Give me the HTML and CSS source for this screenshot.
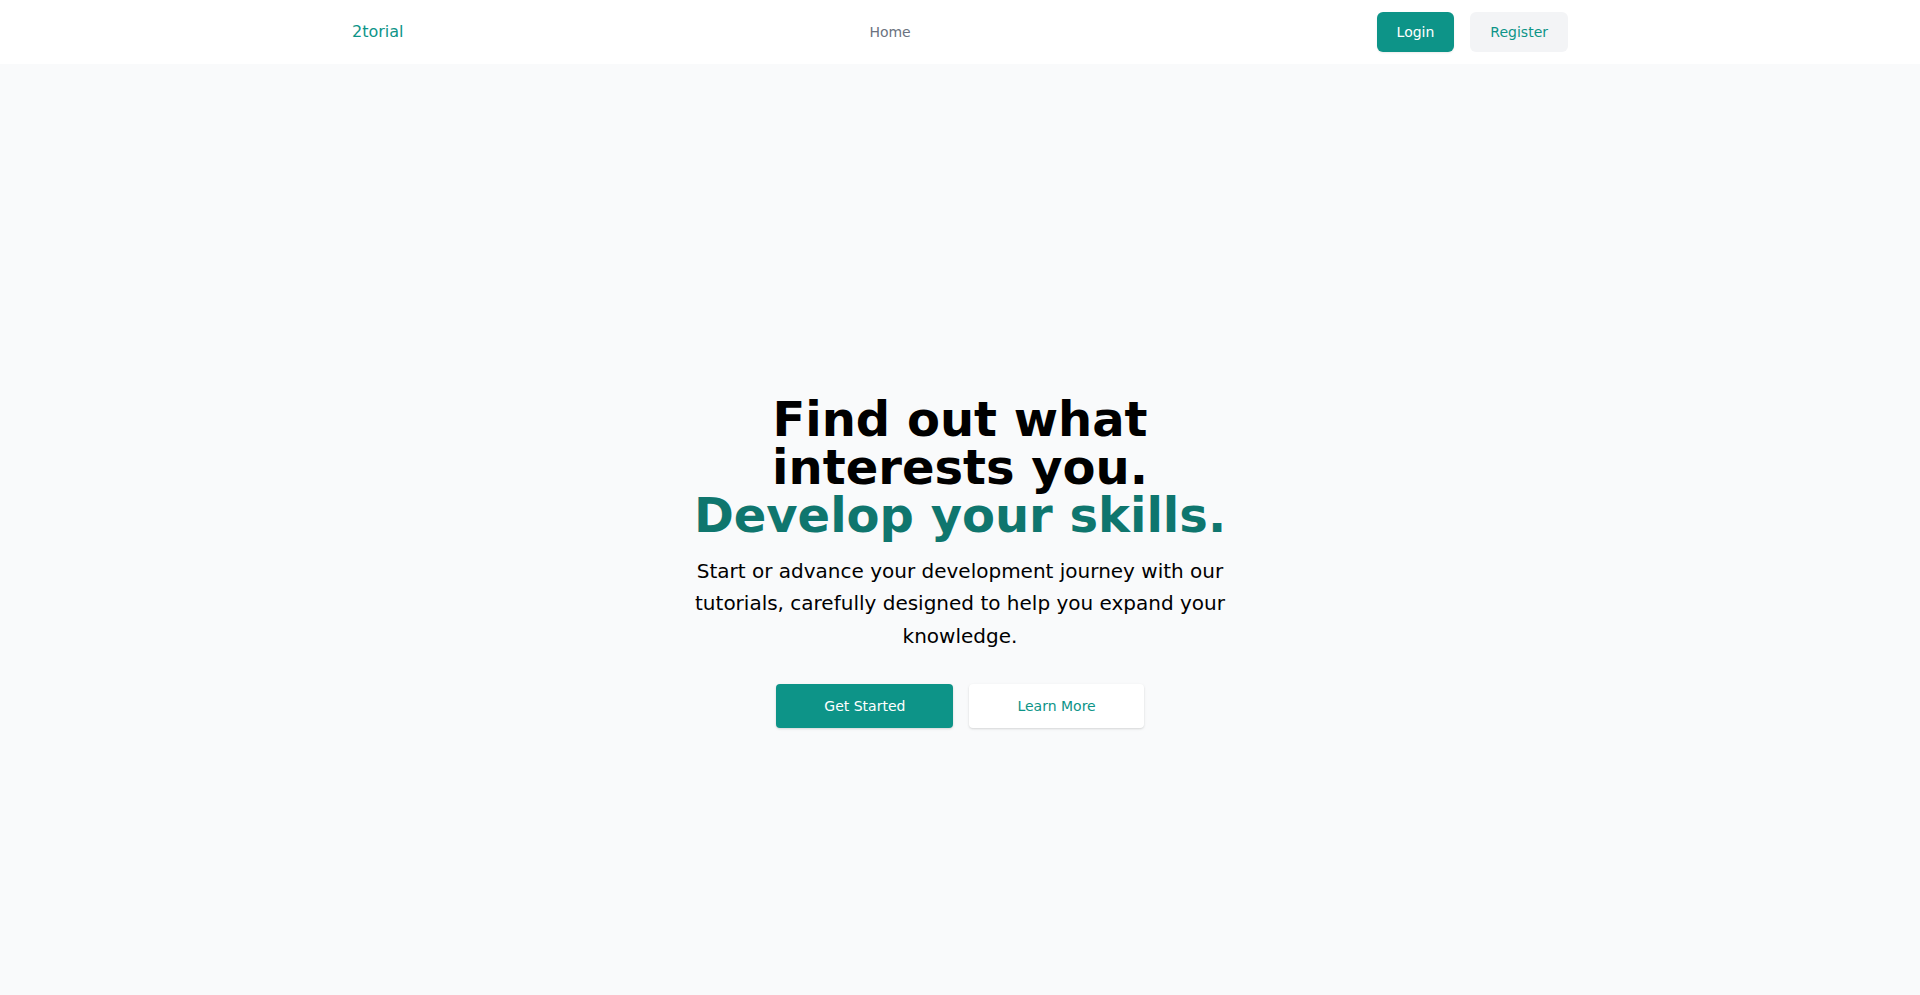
FILE: index.html
```html
<!DOCTYPE html>
<html lang="en">
<head>
<meta charset="utf-8">
<title>2torial</title>
<link rel="stylesheet" href="styles.css">
</head>
<body>
<header class="site-header">
  <div class="header-inner">
    <a class="logo" href="#">2torial</a>
    <nav class="nav">
      <a class="nav-link" href="#">Home</a>
    </nav>
    <div class="auth">
      <a class="btn btn-login" href="#">Login</a>
      <a class="btn btn-register" href="#">Register</a>
    </div>
  </div>
</header>
<main class="hero">
  <div class="hero-inner">
    <h1 class="hero-title">Find out what interests you.<span class="hero-accent">Develop your skills.</span></h1>
    <p class="hero-text">Start or advance your development journey with our tutorials, carefully designed to help you expand your knowledge.</p>
    <div class="hero-actions">
      <a class="cta cta-primary" href="#">Get Started</a>
      <a class="cta cta-secondary" href="#">Learn More</a>
    </div>
  </div>
</main>
</body>
</html>
```

FILE: styles.css
```css
* { box-sizing: border-box; }
html, body { margin: 0; padding: 0; }
body {
  font-family: "DejaVu Sans", sans-serif;
  background: #f9fafb;
  color: #000;
}
a { text-decoration: none; }

.site-header {
  background: #ffffff;
  height: 64px;
}
.header-inner {
  max-width: 1280px;
  height: 64px;
  margin: 0 auto;
  padding: 0 32px;
  display: flex;
  align-items: center;
  justify-content: space-between;
}
.logo {
  font-size: 16px;
  line-height: 24px;
  color: #0d9488;
}
.nav-link {
  font-size: 14px;
  line-height: 20px;
  color: #6b7280;
}
.auth {
  display: flex;
  gap: 16px;
}
.btn {
  display: block;
  font-size: 14px;
  line-height: 20px;
  padding: 10px 20px;
  border-radius: 6px;
}
.btn-login {
  background: #0d9488;
  color: #ffffff;
  box-shadow: 0 1px 2px rgba(0,0,0,0.08);
}
.btn-register {
  background: #f3f4f6;
  color: #0d9488;
}

.hero {
  min-height: 100vh;
  display: flex;
  align-items: center;
  justify-content: center;
}
.hero-inner {
  max-width: 576px;
  width: 100%;
  text-align: center;
}
.hero-title {
  margin: 0;
  font-size: 48px;
  line-height: 48px;
  font-weight: 800;
  color: #000;
}
.hero-accent {
  display: block;
  color: #0f766e;
}
.hero-text {
  margin: 16px 0 0;
  font-size: 20px;
  line-height: 32.5px;
  color: #000;
}
.hero-actions {
  margin-top: 32px;
  display: flex;
  justify-content: center;
  gap: 16px;
}
.cta {
  display: block;
  font-size: 14px;
  line-height: 20px;
  padding: 12px 48px;
  border-radius: 4px;
  box-shadow: 0 1px 3px rgba(0,0,0,0.1), 0 1px 2px rgba(0,0,0,0.06);
}
.cta-primary {
  background: #0d9488;
  color: #ffffff;
}
.cta-secondary {
  background: #ffffff;
  color: #0d9488;
}
```
